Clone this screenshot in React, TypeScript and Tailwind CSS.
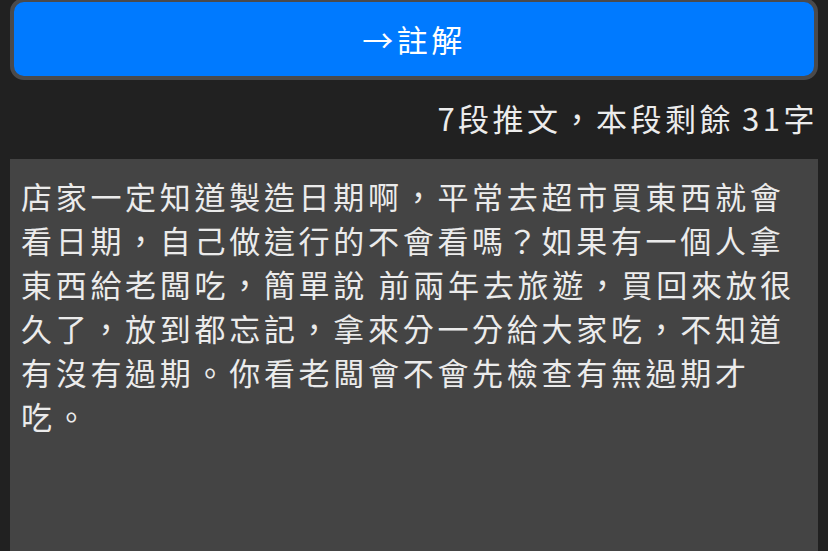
import React from "react";

const lines = [
  "店家一定知道製造日期啊，平常去超市買東西就會",
  "看日期，自己做這行的不會看嗎？如果有一個人拿",
  "東西給老闆吃，簡單說 前兩年去旅遊，買回來放很",
  "久了，放到都忘記，拿來分一分給大家吃，不知道",
  "有沒有過期。你看老闆會不會先檢查有無過期才",
  "吃。",
];

const App = () => {
  return (
    <div
      className="h-[551px] w-[828px] overflow-hidden bg-[#212121] flex flex-col"
      style={{ fontFamily: '"Noto Sans CJK TC", "Noto Sans", sans-serif' }}
    >
      {/* annotate button */}
      <button className="mx-[10px] -mt-[2px] h-[82px] shrink-0 rounded-[14px] border-4 border-[#4a4a4c] bg-[#007aff] text-[31px] tracking-[3.5px] text-white flex items-center justify-center">
        →註解
      </button>

      {/* char counter */}
      <div className="mt-[16px] px-[10px] text-right text-[31px] leading-[44px] tracking-[3.5px] text-[#ececec]">
        7段推文，本段剩餘<span className="tracking-[1px]"> </span>31字
      </div>

      {/* text area */}
      <div className="mt-[19px] mx-[10px] grow bg-[#444444] pt-[15px] pl-[11px] text-[31px] leading-[44px] tracking-[3.7px] text-[#ebebeb]">
        {lines.map((line, i) => (
          <div key={i} className="whitespace-pre">
            {line}
          </div>
        ))}
      </div>
    </div>
  );
};

export default App;
